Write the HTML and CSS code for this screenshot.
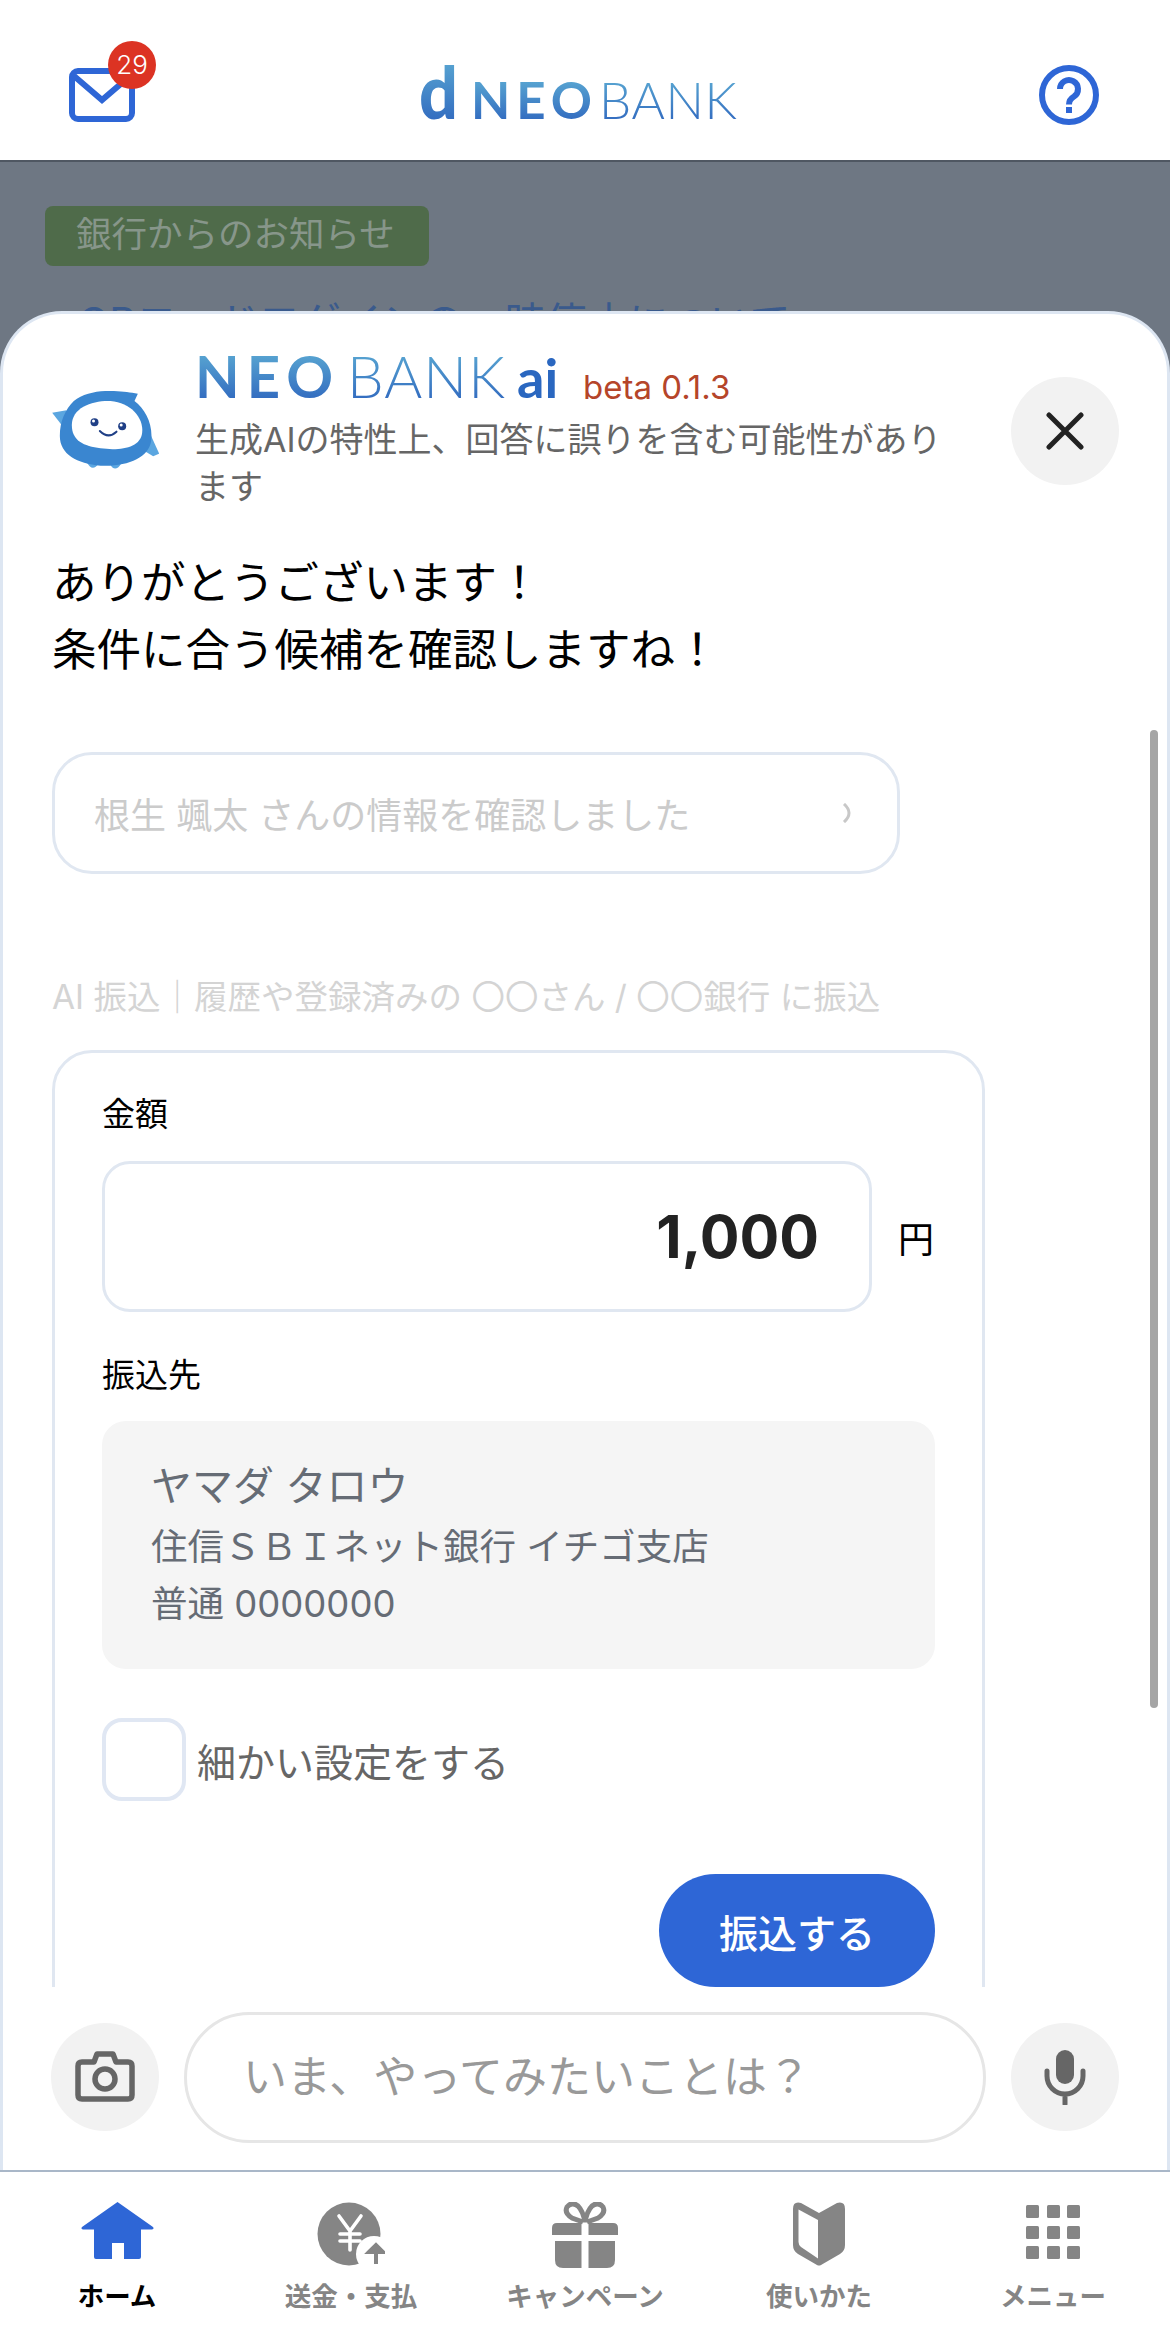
FILE: index.html
```html
<!DOCTYPE html>
<html lang="ja">
<head>
<meta charset="utf-8">
<title>dNEOBANK</title>
<link rel="stylesheet" href="styles.css">
</head>
<body>
<svg class="defs" width="0" height="0" aria-hidden="true">
  <defs>
    <linearGradient id="brand" x1="0" y1="0" x2="0" y2="1">
      <stop offset="0" stop-color="#62b4d6"/>
      <stop offset="1" stop-color="#2a5fbc"/>
    </linearGradient>
  </defs>
</svg>
<div class="page">
  <header class="top">
    <div class="mail">
      <svg class="mail-icon" width="66" height="54" viewBox="0 0 66 54"><rect x="3" y="3" width="60" height="48" rx="6" fill="none" stroke="#2e66d6" stroke-width="6"/><path d="M5 8 L33 32 L61 8" fill="none" stroke="#2e66d6" stroke-width="6"/></svg>
      <span class="badge">29</span>
    </div>
    <svg class="logo" width="330" height="60" viewBox="0 0 330 60">
      <text class="logo-d" x="0" y="54" fill="url(#brand)" textLength="39" lengthAdjust="spacingAndGlyphs">d</text>
      <text class="logo-neo" x="52" y="54" fill="url(#brand)" textLength="121" lengthAdjust="spacing">NEO</text>
      <text class="logo-bank" x="180" y="54" fill="url(#brand)" textLength="138" lengthAdjust="spacing">BANK</text>
    </svg>
    <svg class="help" width="60" height="60" viewBox="0 0 60 60"><circle cx="30" cy="30" r="27" fill="none" stroke="#2e66d6" stroke-width="6"/><path d="M21 24 a9 9 0 1 1 14 7.500 q-5 3-5 8" fill="none" stroke="#2e66d6" stroke-width="6"/><rect x="27" y="42" width="6" height="6" fill="#2e66d6"/></svg>
  </header>

  <main class="main">
    <span class="tag">銀行からのお知らせ</span>
    <p class="news">QRコードログインの一時停止について</p>

    <section class="sheet">
      <div class="head">
        <svg class="mascot" width="107" height="80" viewBox="65 150 320 240">
          <path d="M65 215 L108 208 L98 258 Z" fill="#5ba6e0"/>
          <path d="M362 285 L386 338 L368 346 L342 330 Z" fill="#5ba6e0"/>
          <path d="M168 362 Q185 395 204 368 Z M238 370 Q254 396 272 368 Z" fill="#5ba6e0"/>
          <path d="M130 180 C160 155 210 148 250 150 C280 151 300 155 322 158 L312 180 C345 205 368 250 362 300 C355 350 290 378 210 374 C140 368 88 340 88 285 C88 240 105 205 130 180 Z" fill="#3a86d0"/>
          <path d="M124 252 C124 200 185 178 240 180 C300 184 340 230 335 275 C330 320 270 330 210 322 C160 315 124 300 124 252 Z" fill="#fff"/>
          <circle cx="192" cy="244" r="12" fill="#1f3f86"/><circle cx="189" cy="240" r="4.500" fill="#fff"/>
          <circle cx="275" cy="256" r="12" fill="#1f3f86"/><circle cx="272" cy="252" r="4.500" fill="#fff"/>
          <path d="M208 270 Q233 295 258 272" fill="none" stroke="#1f3f86" stroke-width="6" stroke-linecap="round"/>
        </svg>
        <div class="head-text">
          <div class="title">
            <svg class="title-logo" width="366" height="60" viewBox="0 0 366 60">
              <text class="t-neo" x="0" y="48" fill="url(#brand)" textLength="138" lengthAdjust="spacing">NEO</text>
              <text class="t-bank" x="152" y="48" fill="url(#brand)" textLength="158" lengthAdjust="spacing">BANK</text>
              <text class="t-ai" x="322" y="48">ai</text>
            </svg>
            <span class="beta">beta 0.1.3</span>
          </div>
          <p class="note">生成AIの特性上、回答に誤りを含む可能性があります</p>
        </div>
        <button class="round close" aria-label="閉じる">
          <svg width="38" height="38" viewBox="0 0 38 38"><path d="M3 3 L35 35 M35 3 L3 35" stroke="#222" stroke-width="5" stroke-linecap="round"/></svg>
        </button>
      </div>

      <div class="scroll">
        <p class="msg">ありがとうございます！<br>条件に合う候補を確認しますね！</p>
        <div class="pill">
          <span>根生 颯太 さんの情報を確認しました</span>
          <svg width="14" height="20" viewBox="0 0 14 20"><path d="M3 1 Q13 10 3 19" fill="none" stroke="#c8c8c8" stroke-width="3"/></svg>
        </div>
        <p class="caption">AI 振込｜履歴や登録済みの 〇〇さん / 〇〇銀行 に振込</p>

        <div class="card">
          <div class="label">金額</div>
          <div class="amount">
            <div class="amount-box">1,000</div>
            <span class="yen">円</span>
          </div>
          <div class="label label-to">振込先</div>
          <div class="payee">
            <div class="payee-name">ヤマダ タロウ</div>
            <div class="payee-line">住信ＳＢＩネット銀行 イチゴ支店</div>
            <div class="payee-line">普通 0000000</div>
          </div>
          <div class="check">
            <span class="box"></span>
            <span>細かい設定をする</span>
          </div>
          <div class="actions"><button class="send">振込する</button></div>
        </div>
        <div class="scrollbar"></div>
      </div>

      <div class="composer">
        <button class="round" aria-label="カメラ">
          <svg width="60" height="52" viewBox="0 0 60 52"><path d="M19 11 L22 3 H38 L41 11 H53 Q57 11 57 15 V44 Q57 48 53 48 H7 Q3 48 3 44 V15 Q3 11 7 11 Z" fill="none" stroke="#666" stroke-width="5.500" stroke-linejoin="round"/><circle cx="30" cy="28" r="10" fill="none" stroke="#666" stroke-width="5.500"/></svg>
        </button>
        <div class="ask">いま、やってみたいことは？</div>
        <button class="round" aria-label="マイク">
          <svg width="42" height="56" viewBox="0 0 42 56"><rect x="12" y="1" width="18" height="34" rx="9" fill="#666"/><path d="M3 22 V27 A18 18 0 0 0 39 27 V22 M21 45 V55" fill="none" stroke="#666" stroke-width="5" stroke-linecap="round"/></svg>
        </button>
      </div>
    </section>
  </main>

  <nav class="nav">
    <a class="nav-item active">
      <span class="nav-icon"><svg width="73" height="58" viewBox="0 0 73 58"><path d="M36.500 0 L72 25 Q73.500 27 71 27.500 H60 V55 Q60 57 58 57 H43 V41 H31 V57 H15 Q13 57 13 55 V27.500 H2 Q-.5 27 1 25 Z" fill="#2e66d6"/></svg></span>
      <span class="nav-label">ホーム</span>
    </a>
    <a class="nav-item">
      <span class="nav-icon"><svg width="68" height="64" viewBox="0 0 68 64"><circle cx="32" cy="32" r="31.500" fill="#858585"/><circle cx="57" cy="52" r="18" fill="#fff"/><path d="M22 14 L33 29 L44 14 M33 29 V48 M23 32 H43 M23 39 H43" fill="none" stroke="#fff" stroke-width="3.600" stroke-linecap="round"/><path d="M59 62 V46 M52 50 L59 43 L66 50 Z" fill="#858585" stroke="#858585" stroke-width="4"/></svg></span>
      <span class="nav-label">送金・支払</span>
    </a>
    <a class="nav-item">
      <span class="nav-icon"><svg width="66" height="66" viewBox="0 0 66 66"><path d="M5 21 H61 Q66 21 66 26 V33 H36.500 V21 H29.500 V33 H0 V26 Q0 21 5 21 Z M3 39 H29.500 V66 H11 Q3 66 3 58 Z M36.500 39 H63 V58 Q63 66 55 66 H36.500 Z" fill="#858585"/><path d="M31 20 L20 16 Q12 11 15 5 Q20 -1 26 4 Q31 9 33 20 Q35 9 40 4 Q46 -1 51 5 Q54 11 46 16 L35 20" fill="none" stroke="#858585" stroke-width="5"/></svg></span>
      <span class="nav-label">キャンペーン</span>
    </a>
    <a class="nav-item">
      <span class="nav-icon"><svg width="54" height="64" viewBox="0 0 54 64"><path d="M27 11 L45 1 Q53 -1 53 7 V43 Q53 49 48 52 L29 63 Q27 64 25 63 L6 52 Q1 49 1 43 V7 Q1 -1 9 1 Z" fill="#858585"/><path d="M6.500 7.500 L26 18 V56.500 L9 45 Q6.500 43 6.500 40 Z" fill="#fff"/></svg></span>
      <span class="nav-label">使いかた</span>
    </a>
    <a class="nav-item">
      <span class="nav-icon"><span class="grid-icon"><i></i><i></i><i></i><i></i><i></i><i></i><i></i><i></i><i></i></span></span>
      <span class="nav-label">メニュー</span>
    </a>
  </nav>
</div>
</body>
</html>
```

FILE: styles.css
```css
* { box-sizing: border-box; }
html, body { margin: 0; padding: 0; }
body {
  width: 1170px;
  height: 2340px;
  overflow: hidden;
  background: #fff;
  font-family: Inter, "Noto Sans CJK JP", sans-serif;
  color: #000;
}
p { margin: 0; }
button { font: inherit; border: 0; padding: 0; }
.defs { position: absolute; }

.page { display: flex; flex-direction: column; height: 2340px; }

/* top bar */
.top {
  flex: 0 0 162px;
  display: grid;
  grid-template-columns: 1fr auto 1fr;
  align-items: center;
  padding: 29px 71px 0 69px;
  background: #fff;
  border-bottom: 2px solid #4f5762;
}
.mail { position: relative; width: 66px; height: 54px; }
.mail-icon { display: block; }
.badge {
  position: absolute;
  left: 39px;
  top: -27px;
  width: 48px;
  height: 48px;
  border-radius: 50%;
  background: #dc3323;
  color: #fff;
  font-size: 26px;
  font-weight: 300;
  line-height: 48px;
  text-align: center;
}
.logo { display: block; }
.logo-d { font-family: Lato, sans-serif; font-weight: 900; font-size: 76px; }
.logo-neo { font-family: Lato, sans-serif; font-weight: 700; font-size: 51px; }
.logo-bank { font-family: Lato, sans-serif; font-weight: 300; font-size: 51px; }
.help { justify-self: end; display: block; }

/* dimmed page behind the sheet */
.main {
  flex: 1;
  position: relative;
  overflow: hidden;
  padding: 44px 45px 0;
  background: #6e7783;
}
.tag {
  display: block;
  width: 384px;
  height: 60px;
  padding-left: 31px;
  border-radius: 8px;
  background: #4f6b4a;
  color: #87968a;
  font-size: 35.500px;
  line-height: 58px;
}
.news {
  margin: 26px 0 0 33px;
  color: #3a5a8c;
  font-size: 41px;
  line-height: 60px;
  white-space: nowrap;
}

/* sheet */
.sheet {
  position: absolute;
  left: 0;
  right: 0;
  top: 149px;
  bottom: 0;
  display: flex;
  flex-direction: column;
  background: #fff;
  border: 3px solid #dde6f2;
  border-bottom: 0;
  border-radius: 62px 62px 0 0;
}
.head {
  flex: 0 0 205px;
  display: flex;
  align-items: center;
  padding: 29px 48px 0 49px;
}
.mascot { flex: none; display: block; margin-top: -1px; }
.head-text { flex: none; width: 780px; margin-left: 36px; align-self: flex-start; }
.title { display: flex; align-items: flex-end; height: 73px; gap: 22px; }
.title-logo { display: block; margin-bottom: 6px; margin-top: -8px; flex: none; }
.t-neo { font-family: Lato, sans-serif; font-weight: 700; font-size: 58px; }
.t-bank { font-family: Lato, sans-serif; font-weight: 300; font-size: 58px; }
.t-ai { font-family: Lato, sans-serif; font-weight: 700; font-size: 54px; fill: #2a67c0; }
.beta { color: #b5452a; font-size: 33px; line-height: 46px; margin-bottom: 6px; white-space: nowrap; }
.note { width: 770px; color: #666; font-size: 34px; line-height: 47px; }
.round {
  flex: none;
  width: 108px;
  height: 108px;
  border-radius: 50%;
  background: #f2f2f2;
  display: flex;
  align-items: center;
  justify-content: center;
}
.close { margin-left: auto; }

/* scrolling content */
.scroll {
  flex: 1;
  position: relative;
  overflow: hidden;
  min-height: 0;
  padding: 31px 0 0 49px;
}
.msg { font-size: 44.500px; line-height: 67px; }
.pill {
  width: 848px;
  height: 122px;
  margin-top: 68px;
  padding: 0 42px 0 39px;
  display: flex;
  align-items: center;
  justify-content: space-between;
  border: 3px solid #e0e7f1;
  border-radius: 40px;
  color: #cbcbcb;
  font-size: 36px;
}
.caption {
  margin-top: 99px;
  color: #d4d4d4;
  font-size: 33.500px;
  line-height: 48px;
  white-space: nowrap;
}
.card {
  width: 933px;
  height: 1000px;
  margin-top: 29px;
  padding: 37px 47px 0;
  border: 3px solid #e0e7f1;
  border-radius: 40px;
}
.label { font-size: 33px; line-height: 48px; }
.label-to { margin-top: 39px; }
.amount { display: flex; align-items: center; gap: 26px; margin-top: 23px; }
.amount-box {
  width: 770px;
  height: 151px;
  padding-right: 50px;
  border: 3px solid #e0e7f1;
  border-radius: 28px;
  color: #222;
  font-size: 59px;
  font-weight: 700;
  line-height: 145px;
  text-align: right;
}
.yen { font-size: 36px; }
.payee {
  width: 833px;
  height: 248px;
  margin-top: 22px;
  padding: 35px 0 0 49px;
  border-radius: 24px;
  background: #f5f5f5;
  color: #666c75;
}
.payee-name { font-size: 41px; line-height: 60px; margin-bottom: 3px; }
.payee-line { font-size: 36.500px; line-height: 57px; }
.check { display: flex; align-items: center; gap: 11px; margin-top: 49px; color: #666; font-size: 39px; }
.box {
  width: 84px;
  height: 83px;
  border: 4px solid #e0e7f3;
  border-radius: 20px;
  background: #fff;
}
.actions { display: flex; justify-content: flex-end; width: 833px; margin-top: 73px; }
.send {
  width: 276px;
  height: 113px;
  border-radius: 57px;
  background: #2e66d6;
  color: #fff;
  font-size: 39px;
  font-weight: 500;
}
.scrollbar {
  position: absolute;
  right: 9px;
  top: 211px;
  width: 8px;
  height: 978px;
  border-radius: 4px;
  background: #a5a5a5;
}

/* composer */
.composer {
  flex: 0 0 183px;
  display: flex;
  align-items: flex-start;
  gap: 25px;
  padding: 25px 48px 0;
}
.composer .round { margin-top: 11px; }
.ask {
  flex: none;
  width: 802px;
  height: 131px;
  padding-left: 56px;
  border: 3px solid #e6e6e6;
  border-radius: 66px;
  color: #999;
  font-size: 44px;
  line-height: 125px;
}

/* bottom navigation */
.nav {
  flex: 0 0 170px;
  display: grid;
  grid-template-columns: repeat(5, 234px);
  border-top: 2px solid #a9b7c8;
  background: #fff;
}
.nav-item {
  display: flex;
  flex-direction: column;
  align-items: center;
  padding-top: 27px;
  color: #858585;
}
.nav-icon {
  height: 67px;
  display: flex;
  align-items: flex-start;
  justify-content: center;
}
.nav-icon svg { display: block; margin-top: 3px; }
.nav-label { margin-top: 11px; font-size: 26.500px; font-weight: 700; line-height: 38px; white-space: nowrap; }
.active { color: #000; }
.grid-icon {
  display: grid;
  grid-template-columns: repeat(3, 13px);
  gap: 7.500px;
  margin-top: 6px;
}
.grid-icon i { width: 13px; height: 13px; border-radius: 1.500px; background: #858585; display: block; }
```
